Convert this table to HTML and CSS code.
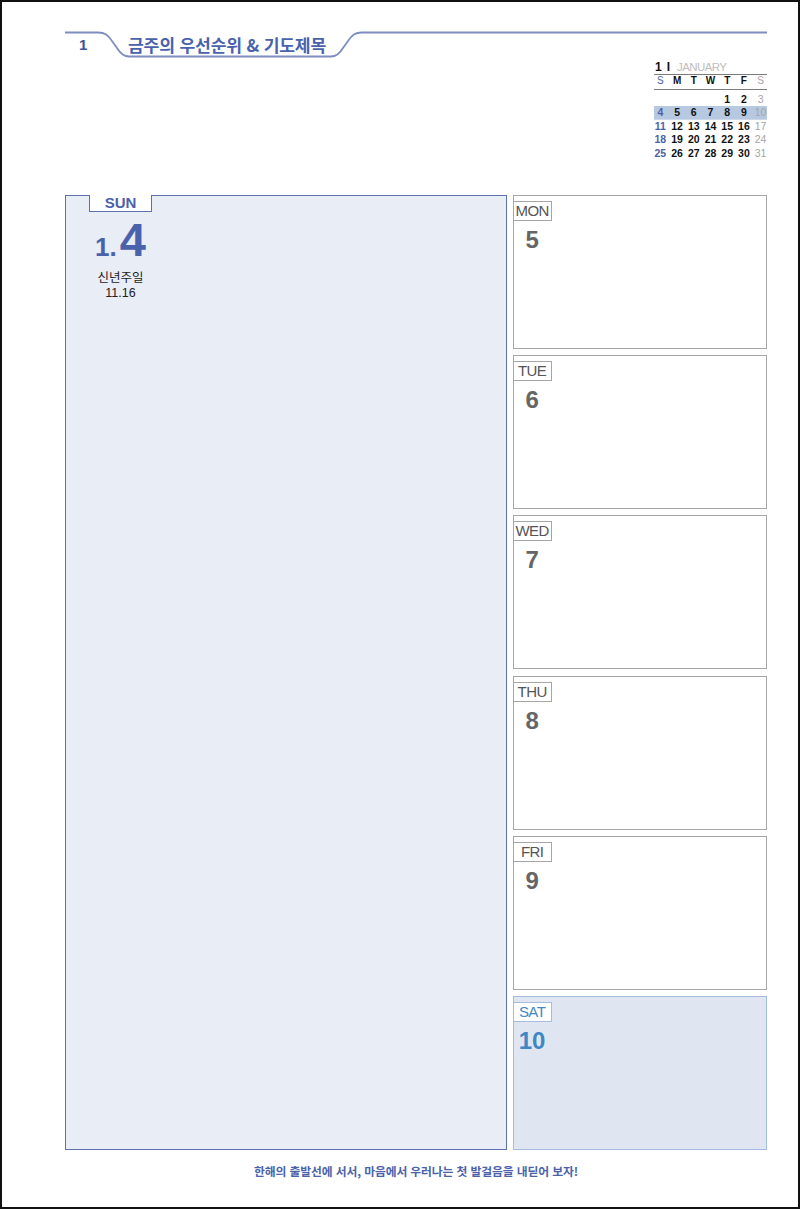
FILE: index.html
```html
<!DOCTYPE html>
<html lang="ko">
<head>
<meta charset="utf-8">
<title>Weekly planner</title>
<link rel="stylesheet" href="styles.css">
</head>
<body>
<div class="page">
  <header class="hdr">
    <svg class="hdr-line" viewBox="0 0 702 58" width="702" height="58" aria-hidden="true">
      <path d="M0 30.5 H33 C40 30.5 43 33 47 39 L52 46 C55 51 58 54.5 64 54.5 H266 C272 54.5 275 51 278 46 L283 39 C287 33 290 30.5 297 30.5 H702" />
    </svg>
    <span class="hdr-num">1</span>
    <span class="hdr-title">금주의 우선순위 &amp; 기도제목</span>
  </header>

  <div class="mini">
    <div class="mini-title"><b>1</b><b class="bar">I</b><span class="mon">JANUARY</span></div>
    <div class="mini-headwrap">
      <div class="mini-row mini-head"><span class="su">S</span><span>M</span><span>T</span><span>W</span><span>T</span><span>F</span><span class="sa">S</span></div>
    </div>
    <div class="mini-days">
      <div class="mini-row"><span></span><span></span><span></span><span></span><span>1</span><span>2</span><span class="sa">3</span></div>
      <div class="mini-row cur"><span class="su">4</span><span>5</span><span>6</span><span>7</span><span>8</span><span>9</span><span class="sa">10</span></div>
      <div class="mini-row"><span class="su">11</span><span>12</span><span>13</span><span>14</span><span>15</span><span>16</span><span class="sa">17</span></div>
      <div class="mini-row"><span class="su">18</span><span>19</span><span>20</span><span>21</span><span>22</span><span>23</span><span class="sa">24</span></div>
      <div class="mini-row"><span class="su">25</span><span>26</span><span>27</span><span>28</span><span>29</span><span>30</span><span class="sa">31</span></div>
    </div>
  </div>

  <main class="week">
    <section class="sunday">
      <div class="sun-tab">SUN</div>
      <div class="sun-date"><span class="sun-m">1.</span><span class="sun-d">4</span></div>
      <div class="sun-note">신년주일<br>11.16</div>
    </section>
    <div class="days">
      <section class="day"><div class="day-tab">MON</div><div class="day-num">5</div></section>
      <section class="day"><div class="day-tab">TUE</div><div class="day-num">6</div></section>
      <section class="day"><div class="day-tab">WED</div><div class="day-num">7</div></section>
      <section class="day"><div class="day-tab">THU</div><div class="day-num">8</div></section>
      <section class="day"><div class="day-tab">FRI</div><div class="day-num">9</div></section>
      <section class="day sat"><div class="day-tab">SAT</div><div class="day-num">10</div></section>
    </div>
  </main>

  <p class="motto">한해의 출발선에 서서, 마음에서 우러나는 첫 발걸음을 내딛어 보자!</p>
</div>
</body>
</html>
```

FILE: styles.css
```css
html, body {
  margin: 0;
  padding: 0;
  background: #ffffff;
}

body {
  font-family: "Liberation Sans", "Noto Sans CJK KR", sans-serif;
}

.page {
  width: 800px;
  height: 1209px;
  box-sizing: border-box;
  border: 2px solid #111111;
  padding: 0 31px 0 63px;
  display: flex;
  flex-direction: column;
  background: #ffffff;
}

/* ---------- header ---------- */
.hdr {
  position: relative;
  height: 58px;
  box-sizing: border-box;
  padding-top: 28px;
  display: flex;
  align-items: center;
  flex-shrink: 0;
}

.hdr-line {
  position: absolute;
  left: 0;
  top: 0;
}

.hdr-line path {
  fill: none;
  stroke: #7d8dc0;
  stroke-width: 1.8;
}

.hdr-num {
  box-sizing: border-box;
  width: 63px;
  padding-left: 14px;
  font-weight: bold;
  font-size: 15px;
  line-height: 28px;
  color: #3f5396;
}

.hdr-title {
  font-family: "Noto Sans CJK KR", "Liberation Sans", sans-serif;
  font-weight: 700;
  font-size: 17.2px;
  line-height: 28px;
  color: #4a62ac;
  letter-spacing: -0.2px;
}

/* ---------- mini calendar ---------- */
.mini {
  margin-left: auto;
  width: 113px;
  height: 100px;
  flex-shrink: 0;
  font-family: "Liberation Sans", sans-serif;
}

.mini-title {
  height: 14px;
  line-height: 14px;
  border-bottom: 1px solid #7c7c7c;
  padding-left: 1px;
  font-size: 12px;
  color: #111;
  display: flex;
  align-items: baseline;
}

.mini-title .bar {
  margin-left: 5px;
  font-size: 12px;
}

.mini-title .mon {
  margin-left: 7px;
  color: #bdbdbd;
  font-size: 11.5px;
  letter-spacing: -0.6px;
}

.mini-headwrap {
  height: 14px;
  border-bottom: 1px solid #7c7c7c;
}

.mini-row {
  display: grid;
  grid-template-columns: repeat(7, 1fr);
  width: 117px;
  margin-left: -2px;
  text-align: center;
  font-size: 10.5px;
  font-weight: bold;
  color: #111;
}

.mini-head {
  padding-top: 1px;
  line-height: 10px;
  font-size: 10px;
}

.mini-days {
  padding-top: 3px;
}

.mini-days .mini-row {
  height: 13.4px;
  line-height: 13.4px;
}

.mini-row .su {
  color: #4a62a8;
  font-weight: normal;
}

.mini-days .mini-row .su {
  font-weight: bold;
}

.mini-row .sa {
  color: #a5a5a5;
  font-weight: normal;
}

.mini-row.cur {
  background: linear-gradient(#b7c8e1, #b7c8e1) center / 113px 100% no-repeat;
}

/* ---------- week ---------- */
.week {
  margin-top: 35px;
  height: 955px;
  flex-shrink: 0;
  display: grid;
  grid-template-columns: 442px 254px;
  column-gap: 6px;
}

.sunday {
  box-sizing: border-box;
  border: 1px solid #5d71b1;
  background: #e8edf6;
}

.sun-tab {
  box-sizing: border-box;
  width: 63px;
  height: 17px;
  margin: -1px 0 0 23px;
  border: 1px solid #5d71b1;
  border-top: none;
  background: #ffffff;
  text-align: center;
  font-weight: bold;
  font-size: 15px;
  line-height: 16px;
  color: #4a62ac;
}

.sun-date {
  width: 63px;
  margin: 8px 0 0 23px;
  text-align: center;
  font-weight: bold;
  font-size: 47px;
  line-height: 40px;
  color: #4a62ac;
  white-space: nowrap;
}

.sun-m {
  font-size: 26px;
  margin-right: 3px;
}

.sun-note {
  width: 63px;
  margin: 4px 0 0 23px;
  text-align: center;
  font-size: 12.5px;
  line-height: 15px;
  color: #222222;
}

.days {
  display: flex;
  flex-direction: column;
  row-gap: 6.2px;
}

.day {
  flex: 1;
  box-sizing: border-box;
  border: 1.4px solid #a6a6a6;
  background: #ffffff;
}

.day-tab {
  box-sizing: border-box;
  width: 39px;
  height: 20px;
  margin: 5px 0 0 -1.4px;
  border: 1.2px solid #a6a6a6;
  background: #ffffff;
  text-align: center;
  font-size: 15px;
  line-height: 18px;
  color: #555555;
  letter-spacing: -0.6px;
}

.day-num {
  width: 39px;
  margin: 7px 0 0 -1.4px;
  text-align: center;
  font-weight: bold;
  font-size: 24px;
  line-height: 24px;
  color: #666666;
}

.day.sat {
  background: #dfe6f1;
  border-color: #a3bcdf;
}

.day.sat .day-tab {
  border-color: #a3bcdf;
  color: #3f88c5;
}

.day.sat .day-num {
  color: #3f88c5;
}

/* ---------- footer ---------- */
.motto {
  margin: 14px 0 0;
  text-align: center;
  font-family: "Noto Sans CJK KR", "Liberation Sans", sans-serif;
  font-weight: 700;
  font-size: 11.8px;
  line-height: 14px;
  color: #4a62ac;
  letter-spacing: -0.1px;
}
```
